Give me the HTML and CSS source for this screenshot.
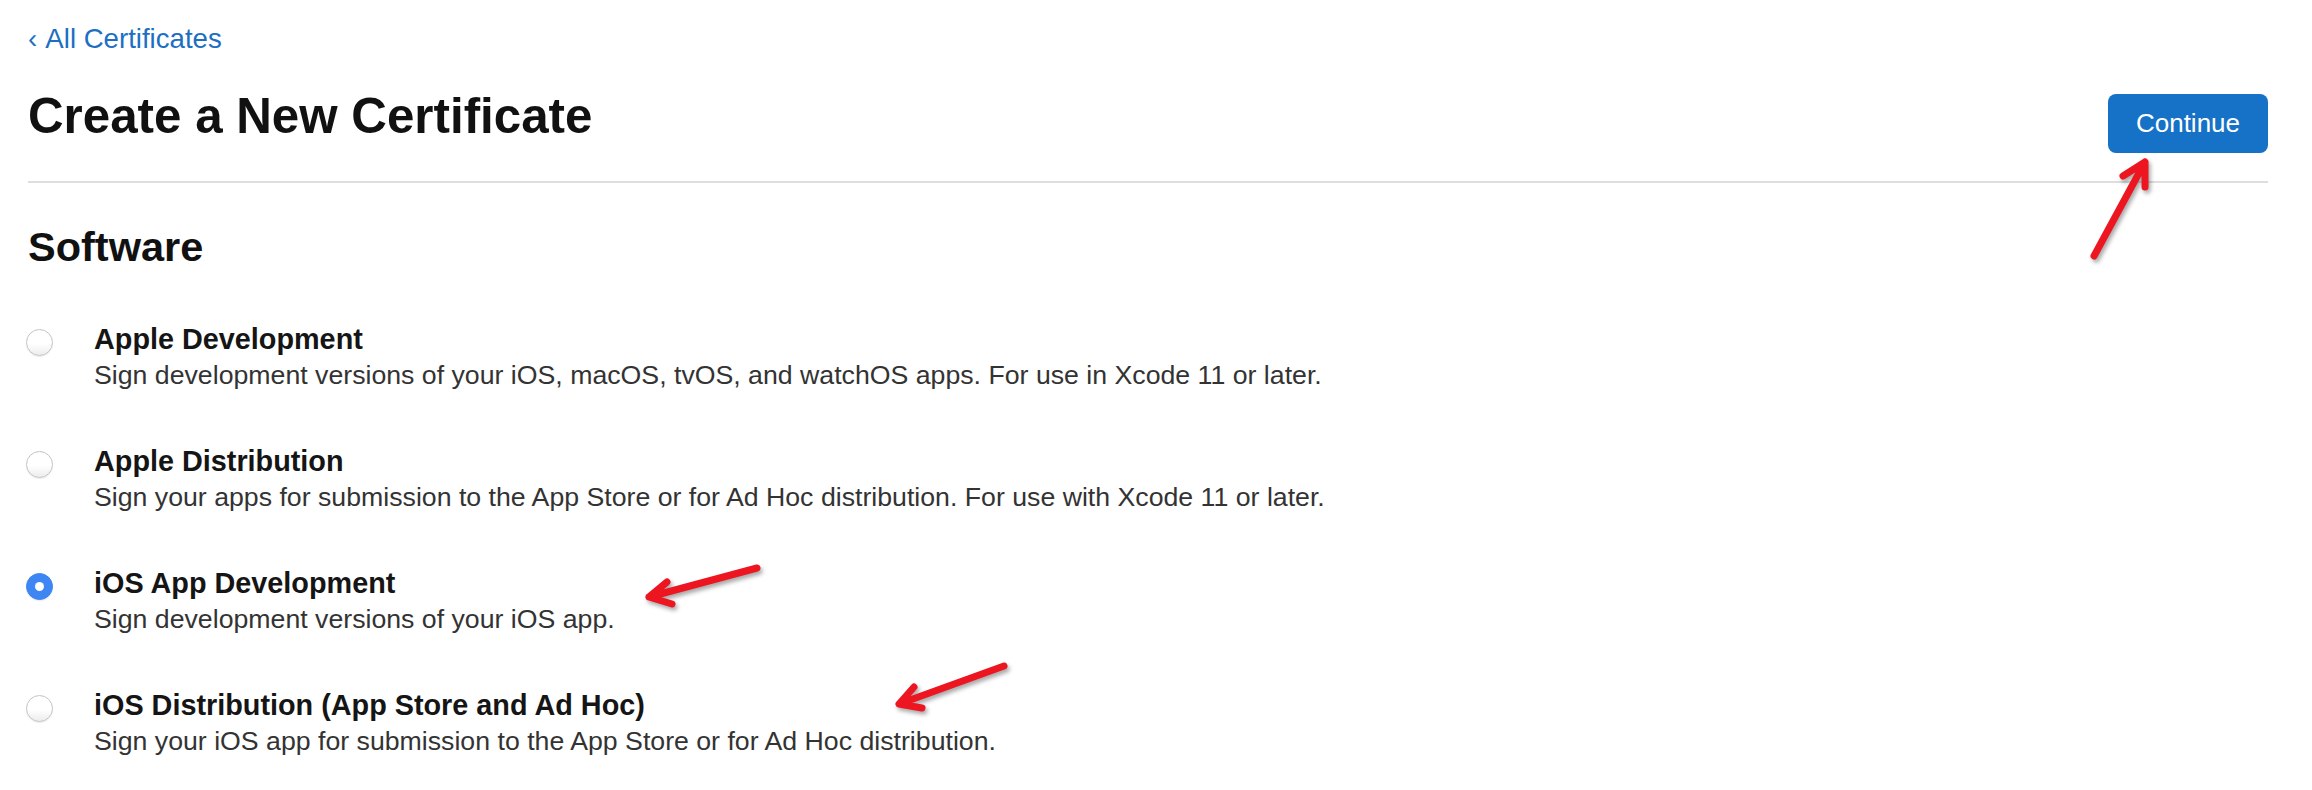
FILE: index.html
```html
<!DOCTYPE html>
<html lang="en">
<head>
<meta charset="utf-8">
<title>Create a New Certificate</title>
<link rel="stylesheet" href="styles.css">
</head>
<body>
<div class="page">
  <a class="back" href="#"><span class="chev">‹</span> All Certificates</a>
  <header class="header">
    <h1 class="title">Create a New Certificate</h1>
    <button class="continue" type="button">Continue</button>
  </header>
  <h2 class="section">Software</h2>
  <ul class="options">
    <li class="option">
      <span class="radio"></span>
      <div class="text">
        <div class="name">Apple Development</div>
        <div class="desc">Sign development versions of your iOS, macOS, tvOS, and watchOS apps. For use in Xcode 11 or later.</div>
      </div>
    </li>
    <li class="option">
      <span class="radio"></span>
      <div class="text">
        <div class="name">Apple Distribution</div>
        <div class="desc">Sign your apps for submission to the App Store or for Ad Hoc distribution. For use with Xcode 11 or later.</div>
      </div>
    </li>
    <li class="option">
      <span class="radio checked"></span>
      <div class="text">
        <div class="name">iOS App Development</div>
        <div class="desc">Sign development versions of your iOS app.</div>
      </div>
    </li>
    <li class="option">
      <span class="radio"></span>
      <div class="text">
        <div class="name">iOS Distribution (App Store and Ad Hoc)</div>
        <div class="desc">Sign your iOS app for submission to the App Store or for Ad Hoc distribution.</div>
      </div>
    </li>
  </ul>
</div>
<svg class="annotations" width="2312" height="790" viewBox="0 0 2312 790" aria-hidden="true">
  <g fill="none" stroke="#ec1520" stroke-width="7" stroke-linecap="round" stroke-linejoin="round">
    <path d="M2094 256 L2145 162 M2123 176 L2145 162 L2145 187"/>
    <path d="M757 568 L649 597 M667 582 L649 597 L672 604"/>
    <path d="M1004 666 L899 704 M914 687 L899 704 L922 708"/>
  </g>
</svg>
</body>
</html>
```

FILE: styles.css
```css
* { box-sizing: border-box; }

html, body {
  margin: 0;
  padding: 0;
  background: #ffffff;
}

body {
  position: relative;
  width: 2312px;
  height: 790px;
  overflow: hidden;
  font-family: "Liberation Sans", Arial, sans-serif;
  color: #111111;
}

.page {
  padding: 23px 44px 0 28px;
}

.back {
  display: block;
  font-size: 27.6px;
  line-height: 32px;
  color: #1c6fc2;
  text-decoration: none;
}

.chev {
  display: inline-block;
  margin-right: 2px;
}

.header {
  display: flex;
  justify-content: space-between;
  align-items: flex-start;
  margin-top: 32px;
  padding-bottom: 28px;
  border-bottom: 2px solid #dedede;
}

.title {
  margin: 0;
  font-size: 49.3px;
  line-height: 58px;
  font-weight: 700;
  color: #111111;
}

.continue {
  margin-top: 7px;
  height: 59px;
  width: 160px;
  padding: 0;
  border: none;
  border-radius: 8px;
  background: #1672c6;
  color: #ffffff;
  font-family: "Liberation Sans", Arial, sans-serif;
  font-size: 26px;
  display: flex;
  align-items: center;
  justify-content: center;
}

.section {
  margin: 40px 0 0;
  font-size: 41.5px;
  line-height: 48px;
  font-weight: 700;
  color: #111111;
}

.options {
  list-style: none;
  margin: 51px 0 0;
  padding: 0;
  display: flex;
  flex-direction: column;
  gap: 51px;
}

.option {
  display: flex;
  align-items: flex-start;
}

.radio {
  flex: none;
  width: 27px;
  height: 27px;
  margin: 7px 0 0 -2px;
  border-radius: 50%;
  border: 1px solid #c4c4c4;
  background: linear-gradient(180deg, #ffffff 0%, #ffffff 55%, #ececec 100%);
  box-shadow: 0 1px 1px rgba(0, 0, 0, 0.08);
  display: flex;
  align-items: center;
  justify-content: center;
}

.radio.checked {
  border-color: #3d85f0;
  background: #3d86f4;
}

.radio.checked::after {
  content: "";
  width: 9px;
  height: 9px;
  border-radius: 50%;
  background: #ffffff;
}

.text {
  margin-left: 41px;
}

.name {
  font-size: 28.8px;
  line-height: 35px;
  font-weight: 700;
  color: #151515;
}

.desc {
  margin-top: 1px;
  font-size: 26.7px;
  line-height: 35px;
  color: #333333;
}

.annotations {
  position: absolute;
  top: 0;
  left: 0;
  pointer-events: none;
  filter: drop-shadow(2px 3px 2px rgba(0, 0, 0, 0.35));
}
```
